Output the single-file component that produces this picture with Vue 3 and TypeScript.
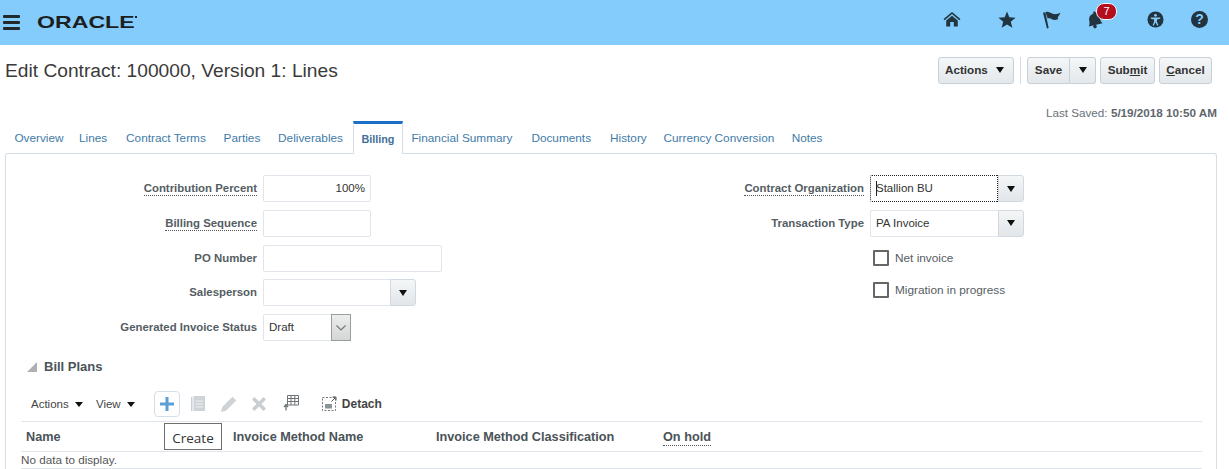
<script setup lang="ts">
const tabs = ['Overview','Lines','Contract Terms','Parties','Deliverables','Billing','Financial Summary','Documents','History','Currency Conversion','Notes']
</script>

<template>
  <div class="page">
    <header class="top">
      <div class="brand">
        <div class="burger"><i></i><i></i><i></i></div>
        <span class="logo">ORACLE</span><span class="tm"></span>
      </div>
      <div class="topicons">
        <svg class="ti home" viewBox="0 0 20 18"><path d="M10 1 0.5 9l1.2 1.4L10 3.5l8.3 6.9L19.5 9z" /><path d="M3.5 10.8 10 5.3l6.5 5.5V17.5h-4.500v-5H8v5H3.500z" /></svg>
        <svg class="ti star" viewBox="0 0 20 19"><path d="M10 .5l2.6 6.5 7 .5-5.4 4.5 1.8 6.8L10 15.1l-6 3.7 1.8-6.8L.4 7.500l7-.5z" /></svg>
        <svg class="ti flag" viewBox="0 0 20 20"><path d="M.5 3 3 2.300 6.500 19l-1.800.5z" /><path d="M3.200 2.500C7 .5 9 4.500 13 4.500c2.500 0 4-.8 6-1.500-1 2-2 3.500-3 5 .3 1 .5 1.500 .5 1.500-3 1.500-6 1-8-.5-1-.5-2-.5-3 0z" /></svg>
        <div class="bell">
          <svg class="ti bellsvg" viewBox="0 0 18 20"><path d="M7 1.500c1-1 2.500-.5 3 .8 3 1 4 3 4.500 6 .4 3 1.500 4.500 3 6L2 18c.8-2 1.200-4 .5-7-.5-3 .5-6 4.500-7.500z" /><circle cx="9" cy="18" r="2" /></svg>
          <span class="badge">7</span>
        </div>
        <svg class="ti acc" viewBox="0 0 18 18"><circle cx="9" cy="9" r="8.500" /><circle cx="9" cy="4.600" r="1.500" fill="#84ccfb" /><path d="M4 6.800h10v1.300l-3.500.8v2.400l1.600 3.700-1.200.5L9 12l-1.900 3.500-1.200-.5 1.600-3.700V8.900L4 8.100z" fill="#84ccfb" /></svg>
        <div class="help">?</div>
      </div>
    </header>

    <div class="titlebar">
      <h1>Edit Contract: 100000, Version 1: Lines</h1>
      <div class="actions">
        <button class="btn b-actions">Actions <span class="caret"></span></button>
        <span class="sep"></span>
        <div class="split">
          <button class="btn b-save">Save</button>
          <button class="btn b-drop"><span class="caret"></span></button>
        </div>
        <button class="btn b-submit">Sub<u>m</u>it</button>
        <button class="btn b-cancel"><u>C</u>ancel</button>
      </div>
    </div>

    <div class="saved">Last Saved: <b>5/19/2018 10:50 AM</b></div>

    <nav class="tabs">
      <a v-for="t in tabs" :key="t" class="tab" :class="{ on: t === 'Billing' }">{{ t }}</a>
    </nav>

    <section class="panel">
      <div class="form">
        <div class="col left">
          <div class="row"><label><span class="dot">Contribution Percent</span></label><div class="inp w108 num">100%</div></div>
          <div class="row"><label><span class="dot">Billing Sequence</span></label><div class="inp w108"></div></div>
          <div class="row"><label>PO Number</label><div class="inp w179"></div></div>
          <div class="row"><label>Salesperson</label><div class="combo w153"><div class="cval"></div><div class="cbtn"><span class="caret"></span></div></div></div>
          <div class="row"><label>Generated Invoice Status</label>
            <div class="select"><span class="sval">Draft</span><span class="sbtn"><svg viewBox="0 0 10 6" width="10" height="6"><path d="M.5 .5 5 5l4.500-4.500" fill="none" stroke="#777" stroke-width="1.200" /></svg></span></div>
          </div>
        </div>
        <div class="col right">
          <div class="row"><label><span class="dot">Contract Organization</span></label><div class="combo w154"><div class="cval focus"><span class="cursor"></span>Stallion BU</div><div class="cbtn"><span class="caret"></span></div></div></div>
          <div class="row"><label>Transaction Type</label><div class="combo w154"><div class="cval">PA Invoice</div><div class="cbtn"><span class="caret"></span></div></div></div>
          <div class="check first"><span class="box"></span>Net invoice</div>
          <div class="check"><span class="box"></span>Migration in progress</div>
        </div>
      </div>

      <div class="billplans">
        <h2><span class="tri"></span>Bill Plans</h2>
        <div class="toolbar">
          <span class="menu">Actions <span class="caret sm"></span></span>
          <span class="menu view">View <span class="caret sm"></span></span>
          <span class="plusbtn"><svg viewBox="0 0 14 14" width="14" height="14"><path d="M5.500 0h3v5.500H14v3H8.500V14h-3V8.500H0v-3h5.500z" fill="#5b9fd4" /></svg></span>
          <svg class="tool t1" viewBox="0 0 14 15" width="14" height="15"><path d="M0 1h1.500v14H0z" fill="#c9cfd3" /><rect x="2.500" y="0" width="11.500" height="15" fill="#cdd3d7" /><path d="M4.500 5h7.500M4.500 8h7.500M4.500 11h7.500" stroke="#f0f2f3" stroke-width="1.200" /></svg>
          <svg class="tool t2" viewBox="0 0 16 16" width="16" height="16"><path d="M0 16l1.200-5L11.500.800l3.700 3.700L5 14.800z" fill="#cdd3d7" /></svg>
          <svg class="tool t3" viewBox="0 0 14 14" width="14" height="14"><path d="M2.500 0 7 4.500 11.500 0 14 2.500 9.500 7l4.500 4.500-2.500 2.500L7 9.500 2.500 14 0 11.500 4.500 7 0 2.500z" fill="#c8ced2" /></svg>
          <svg class="tool t4" viewBox="0 0 16 16" width="16" height="16"><path d="M4.500 .5h11v9.500h-11zM4.500 3.500h11M4.500 6.500h11M8 .5v9.500M11.800 .5v9.500" fill="none" stroke="#6d7478" stroke-width="1" /><path d="M3 15.500V10.500M1 12l2-2.500L5 12" fill="none" stroke="#6d7478" stroke-width="1.300" /></svg>
          <svg class="tool t5" viewBox="0 0 15 15" width="15" height="15"><rect x=".5" y="1.500" width="13" height="13" fill="none" stroke="#777" stroke-dasharray="2 1.500" /><rect x="3" y="8" width="7" height="4.500" fill="#8d9498" /><path d="M9.500 5.500 13.500 1.500M10.500 1h3.500v3.500" fill="none" stroke="#555" /></svg>
          <span class="detach">Detach</span>
        </div>
        <div class="table">
          <div class="thead">
            <span class="c1">Name</span>
            <span class="c2">Invoice Method Name</span>
            <span class="c3">Invoice Method Classification</span>
            <span class="c4"><span class="dot">On hold</span></span>
            <span class="tooltip">Create</span>
          </div>
          <div class="empty">No data to display.</div>
        </div>
      </div>
    </section>
  </div>
</template>

<style>
html, body { margin: 0; padding: 0; background: #fff; overflow: hidden; }
</style>

<style scoped>
.page { width: 1229px; height: 469px; overflow: hidden; font-family: "Liberation Sans", Arial, sans-serif; font-size: 11.5px; color: #333; background: #fff; }

.top { height: 45px; background: #84ccfb; display: flex; justify-content: space-between; align-items: center; }
.brand { display: flex; align-items: center; padding-left: 3px; }
.burger { width: 17px; display: flex; flex-direction: column; gap: 3px; margin-right: 17px; }
.burger i { display: block; height: 3px; background: #22292d; border-radius: 1px; }
.logo { font-size: 17px; font-weight: 700; color: #1c1f22; display: inline-block; width: 98px; transform: scaleX(1.36); transform-origin: left center; line-height: 17px; margin-top: -1px; }
.tm { width: 2px; height: 2px; background: #1c1f22; margin-top: -12px; }
.topicons { display: flex; align-items: center; margin-right: 21px; padding-bottom: 7px; }
.ti { fill: #22343f; display: block; }
.home { width: 18px; height: 16px; margin-right: 37px; }
.star { width: 18px; height: 17px; margin-right: 26px; }
.flag { width: 20px; height: 19px; margin-right: 25px; }
.bell { position: relative; width: 18px; height: 20px; margin-right: 42px; }
.bellsvg { width: 16px; height: 19px; margin-top: 1px; }
.badge { position: absolute; left: 9px; top: -6px; width: 19px; height: 15px; border-radius: 8px; background: #b40d1e; border: 1px solid #eef6fb; color: #fff; font-size: 11px; line-height: 15px; text-align: center; box-sizing: content-box; }
.acc { width: 17px; height: 17px; fill: #22343f; margin-right: 27px; }
.help { width: 17px; height: 17px; border-radius: 50%; background: #22343f; color: #84ccfb; font-weight: 700; font-size: 14px; line-height: 17px; text-align: center; }

.titlebar { height: 52px; display: flex; justify-content: space-between; align-items: center; padding: 0 17px 0 5px; }
h1 { margin: 0; font-size: 19.2px; font-weight: 400; color: #3a3a3a; line-height: 24px; }
.actions { display: flex; align-items: center; height: 27px; position: relative; top: -1px; }
.btn { height: 27px; box-sizing: border-box; border: 1px solid #c5d0d8; border-radius: 3px; background: linear-gradient(#f4f6f7, #e4e8eb); font: 700 11.7px "Liberation Sans", Arial, sans-serif; color: #333; padding: 0 0 1px; display: flex; align-items: center; justify-content: center; white-space: pre; }
.b-actions { width: 76px; gap: 5px; padding-right: 3px; }
.sep { width: 1px; height: 27px; background: #d4dce2; margin: 0 6px; }
.split { display: flex; margin-right: 4px; }
.b-save { width: 43px; border-radius: 3px 0 0 3px; border-right: 1px solid #c5d0d8; }
.b-drop { width: 26px; border-radius: 0 3px 3px 0; border-left: 0; }
.b-submit { width: 55px; margin-right: 4px; }
.b-cancel { width: 53px; }
.caret { display: inline-block; width: 0; height: 0; border-left: 4.500px solid transparent; border-right: 4.500px solid transparent; border-top: 6px solid #111; }
.caret.sm { border-top-width: 5px; margin-left: 3px; position: relative; top: -1px; }

.saved { height: 24px; padding-top: 8px; line-height: 16px; text-align: right; padding-right: 12px; color: #6a7278; box-sizing: border-box; font-size: 11.700px; }
.saved b { color: #5f676d; }

.tabs { height: 32px; display: flex; padding-left: 5.500px; position: relative; z-index: 1; font-size: 11.800px; }
.tab { padding: 0 8.900px; line-height: 35px; color: #3f7ba8; white-space: nowrap; box-sizing: border-box; }
.tab:nth-child(1) { padding-right: 6.500px; }
.tab:nth-child(2) { padding-right: 10px; }
.tab:nth-child(7), .tab:nth-child(8) { padding: 0 9.500px; }
.tab:nth-child(9) { padding: 0 8px 0 9.500px; }
.tab:nth-child(10), .tab:nth-child(11) { padding: 0 8.700px; }
.tab.on { font-weight: 700; font-size: 10.800px; color: #42709a; background: #fff; border-top: 3px solid #1a6fc9; border-left: 1px solid #d4dee7; border-right: 1px solid #d4dee7; height: 33px; width: 50px; line-height: 30px; padding: 0; text-align: center; margin: 0 -1px 0 1px; }

.panel { margin: 0 12px 0 5px; height: 320px; border: 1px solid #d6dfe6; border-bottom: 0; border-radius: 3px 3px 0 0; box-sizing: border-box; position: relative; }
.form { display: flex; height: 204px; padding-top: 21px; box-sizing: border-box; }
.col { display: flex; flex-direction: column; gap: 7.800px; }
.left { width: 620px; }
.row { display: flex; align-items: center; height: 27px; }
label { font-weight: 700; font-size: 11.400px; color: #555d63; text-align: right; display: block; margin-right: 6px; padding-bottom: 1px; white-space: nowrap; }
.left label { width: 251px; }
.right label { width: 238px; }
.dot { border-bottom: 1px dotted #555; padding-bottom: 1px; }
.inp { height: 27px; border: 1px solid #dfe5ea; border-radius: 2px; box-sizing: border-box; background: #fff; }
.w108 { width: 108px; }
.w179 { width: 179px; }
.num { text-align: right; line-height: 25px; padding-right: 5px; color: #333; }
.combo { display: flex; height: 27px; box-sizing: border-box; }
.w153 { width: 153px; }
.w154 { width: 154px; }
.cval { flex: 1; border: 1px solid #dfe5ea; border-right: 0; border-radius: 2px 0 0 2px; box-sizing: border-box; line-height: 25px; padding-left: 5px; color: #333; white-space: nowrap; position: relative; }
.cval.focus { border: 1px dotted #222; }
.cursor { position: absolute; left: 5px; top: 5px; width: 1px; height: 15px; background: #222; }
.cbtn { width: 26px; border: 1px solid #d0d9df; border-radius: 0 3px 3px 0; box-sizing: border-box; background: linear-gradient(#f4f6f7, #e2e6e9); display: flex; align-items: center; justify-content: center; }
.select { width: 88px; height: 27px; border: 1px solid #dfe5ea; border-radius: 2px; box-sizing: border-box; display: flex; justify-content: space-between; line-height: 25px; padding-left: 5px; }
.sbtn { width: 20px; background: linear-gradient(#eceeee, #d4d6d6); border: 1px solid #9a9d9e; box-sizing: border-box; display: flex; align-items: center; justify-content: center; margin: -1px -1px -1px 0; }
.check { display: flex; align-items: center; margin-left: 245px; color: #555d63; height: 16px; font-size: 11.800px; }
.check.first { margin-top: 5px; margin-bottom: 8.300px; }
.box { width: 12px; height: 12px; border: 2px solid #666; border-radius: 1px; margin-right: 6px; margin-left: 2px; box-sizing: content-box; }

.billplans { padding-left: 15px; padding-right: 15px; }
h2 { margin: 0; font-size: 13px; font-weight: 700; color: #4a5358; height: 18px; line-height: 18px; display: flex; align-items: center; padding-left: 6px; }
.tri { width: 0; height: 0; border-bottom: 10px solid #aeb1b3; border-left: 10px solid transparent; margin-right: 7px; }
.toolbar { height: 27px; margin-top: 14px; display: flex; align-items: center; position: relative; padding-left: 10px; }
.menu { color: #444; }
.view { margin-left: 13px; }
.plusbtn { width: 26px; height: 26px; border: 1px solid #d4dfe8; border-radius: 4px; box-sizing: border-box; display: flex; align-items: center; justify-content: center; margin-left: 19px; }
.tool { display: block; }
.t1 { margin-left: 11px; }
.t2 { margin-left: 16px; }
.t3 { margin-left: 15px; }
.t4 { margin-left: 17px; margin-top: -1px; }
.t5 { margin-left: 23px; }
.detach { font-weight: 700; font-size: 12px; color: #444; margin-left: 5px; }

.table { margin-top: 4px; margin-right: -1px; }
.thead { position: relative; height: 31px; border-top: 1px solid #dfe5ea; border-bottom: 1px solid #dfe5ea; box-sizing: border-box; display: flex; align-items: center; font-weight: 700; color: #4a5358; font-size: 12.700px; }
.thead > span { white-space: nowrap; }
.c1 { width: 212px; padding-left: 5px; box-sizing: border-box; }
.c2 { width: 203px; }
.c3 { width: 227px; }
.tooltip { position: absolute; left: 143px; top: 1px; width: 58px; height: 27px; box-sizing: border-box; border: 1px solid #6f6f6f; background: #fff; font: 400 13.500px "Open Sans", sans-serif; color: #333; text-align: center; line-height: 28px; }
.empty { height: 16px; border-bottom: 1px solid #dfe5ea; color: #555; line-height: 16px; font-size: 11.700px; }
</style>
